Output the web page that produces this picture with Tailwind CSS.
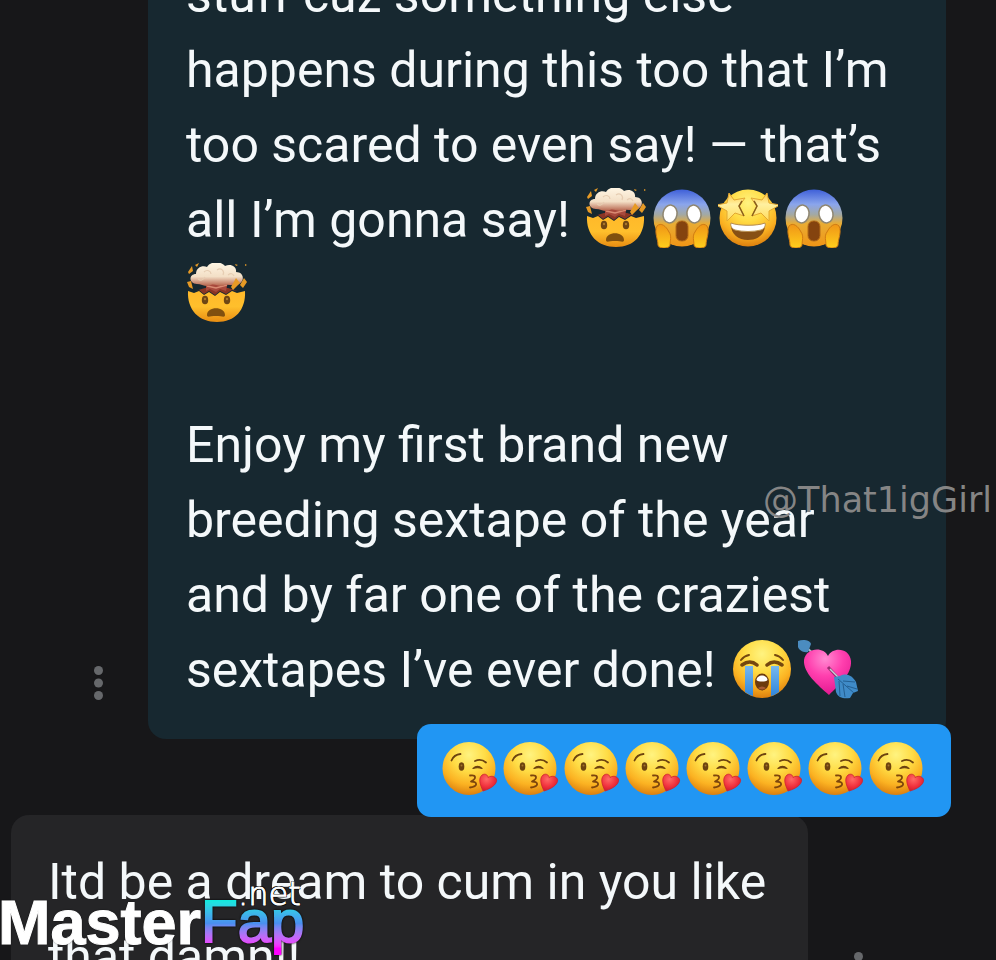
<!DOCTYPE html>
<html lang="en">
<head>
  <meta charset="UTF-8">
  <meta name="viewport" content="width=device-width, initial-scale=1.0">
  <title>Messages</title>
  <script src="https://cdn.jsdelivr.net/npm/@tailwindcss/browser@4"></script>
</head>
<body class="bg-[#171719] text-[#f4f8fa] font-['Roboto',sans-serif]">
  <!-- Emoji sprites -->
  <svg class="absolute w-0 h-0" aria-hidden="true">
    <defs>
      <radialGradient id="gFace" cx="50%" cy="24%" r="78%">
        <stop offset="0" stop-color="#fff380"/>
        <stop offset=".4" stop-color="#ffdc45"/>
        <stop offset=".72" stop-color="#fbb222"/>
        <stop offset="1" stop-color="#d97a0c"/>
      </radialGradient>
      <linearGradient id="gBowl" x1="0" y1="0" x2="0" y2="1">
        <stop offset="0" stop-color="#ffb92a"/>
        <stop offset=".5" stop-color="#ffbf2c"/>
        <stop offset="1" stop-color="#e88d12"/>
      </linearGradient>
      <linearGradient id="gScream" x1="0" y1="0" x2="0" y2="1">
        <stop offset="0" stop-color="#3f60d8"/>
        <stop offset=".26" stop-color="#8aa5ec"/>
        <stop offset=".44" stop-color="#a3a9a4"/>
        <stop offset=".6" stop-color="#e9ac33"/>
        <stop offset="1" stop-color="#f09516"/>
      </linearGradient>
      <linearGradient id="gHand" x1="0" y1="0" x2="0" y2="1">
        <stop offset="0" stop-color="#f09516"/>
        <stop offset="1" stop-color="#ffcf1c"/>
      </linearGradient>
      <linearGradient id="gCloud" x1="0" y1="0" x2="0" y2="1">
        <stop offset="0" stop-color="#fff6e4"/>
        <stop offset=".6" stop-color="#f3dfc6"/>
        <stop offset="1" stop-color="#b5614a"/>
      </linearGradient>
      <linearGradient id="gStar" x1="0" y1="0" x2="0" y2="1">
        <stop offset="0" stop-color="#ffc53d"/>
        <stop offset=".4" stop-color="#fff0a0"/>
        <stop offset="1" stop-color="#ffdc5c"/>
      </linearGradient>
      <linearGradient id="gTear" x1="0" y1="0" x2="0" y2="1">
        <stop offset="0" stop-color="#78b8ee"/>
        <stop offset="1" stop-color="#2f86dc"/>
      </linearGradient>
      <radialGradient id="gPink" cx="45%" cy="20%" r="85%">
        <stop offset="0" stop-color="#ff8ad2"/>
        <stop offset=".45" stop-color="#ff3fae"/>
        <stop offset="1" stop-color="#e0148d"/>
      </radialGradient>
      <radialGradient id="gRed" cx="40%" cy="30%" r="75%">
        <stop offset="0" stop-color="#ff6a66"/>
        <stop offset=".6" stop-color="#f0303c"/>
        <stop offset="1" stop-color="#c81a2c"/>
      </radialGradient>

      <symbol id="mindblown" viewBox="0 0 60 60">
        <path d="M1 28 L7 30 L12 28 L17 32 L22 29 L28 33 L33 29 L39 32 L45 28 L50 30 L58 28 C59 47 48 59 30 59 C12 59 0 47 1 28Z" fill="url(#gBowl)"/>
        <path d="M8 28 L12 27 L17 31 L22 28 L28 32 L33 28 L39 31 L45 27 L51 28 L41 25 L18 25Z" fill="#8b3524"/>
        <path d="M19 18 H41 L39 28 L33 26 L29 29 L23 26 L19 28Z" fill="#a8493c"/>
        <path d="M20 23 L29 25 L40 22" fill="none" stroke="#d98a72" stroke-width="1.500"/>
        <path d="M10 21 C1 20 2 11 9 11 C9 4 16 2 20 4 C23 -2 34 -2 38 3 C44 0 50 4 49 9 C57 9 58 18 52 21 C47 24 42 21 38 22 C33 25 28 20 24 22 C19 25 15 21 10 21Z" fill="url(#gCloud)"/>
        <path d="M17 9 C20 6 24 8 24 11 M30 7 C34 4 38 8 36 12 M11 16 Q15 19 18 14 M41 12 Q45 9 47 13" fill="none" stroke="#e6cdb2" stroke-width="1.200"/>
        <path d="M1 9 L5 3 L6 8 L2 11Z M8 2 L12 0 L10 4Z M0 19 L4 18 L6 26 L2 24Z M44 24 L49 15 L53 20 L46 27Z M53 22 L57 15 L60 19 L56 25Z M48 1 L51 2 L49 3Z M58 1 L60 2 L58 3Z" fill="#e79a25"/>
        <ellipse cx="18" cy="37" rx="3.200" ry="4.300" fill="#6e4614"/>
        <ellipse cx="40" cy="37" rx="3.200" ry="4.300" fill="#6e4614"/>
        <circle cx="18" cy="36" r="1.200" fill="#a8772c"/>
        <circle cx="40" cy="36" r="1.200" fill="#a8772c"/>
        <path d="M20 52 C20 43 38 43 38 52 C38 55 35 53 29 53 C23 53 20 55 20 52Z" fill="#80500f"/>
      </symbol>

      <symbol id="scream" viewBox="0 0 60 60">
        <circle cx="30" cy="30" r="28.5" fill="url(#gScream)"/>
        <ellipse cx="18" cy="26" rx="7" ry="9" transform="rotate(10 18 26)" fill="#fff" stroke="#8f8670" stroke-width="1.500"/>
        <ellipse cx="42" cy="26" rx="7" ry="9" transform="rotate(-10 42 26)" fill="#fff" stroke="#8f8670" stroke-width="1.500"/>
        <rect x="24" y="33" width="12" height="20" rx="5.500" fill="#84430f" stroke="#b36a18"/>
        <path d="M5 38 C9 34 14 38 17 44 C20 48 18 53 18 57 C18 61 6 61 6 57 C6 51 2 44 5 38Z" fill="url(#gHand)" stroke="#cf7a12"/>
        <path d="M55 38 C51 34 46 38 43 44 C40 48 42 53 42 57 C42 61 54 61 54 57 C54 51 58 44 55 38Z" fill="url(#gHand)" stroke="#cf7a12"/>
      </symbol>

      <symbol id="starstruck" viewBox="0 0 60 60">
        <circle cx="30" cy="30" r="28.5" fill="url(#gFace)"/>
        <path d="M13 35 C20 38 40 38 47 35 C48 46 40 52 30 52 C20 52 12 46 13 35Z" fill="#875014"/>
        <path d="M13 35 C20 38 40 38 47 35 C48 38 46 41 43 42 C35 44 25 44 17 42 C14 41 12 38 13 35Z" fill="#fff" stroke="#b99150"/>
        <path d="M11 5 L16 12 L27 10 L21 18 L26 28 L17 25 L9 33 L9 23 L-2 17 L9 15Z" fill="url(#gStar)" stroke="#e2a832" stroke-linejoin="round"/>
        <path d="M49 5 L44 12 L33 10 L39 18 L34 28 L43 25 L51 33 L51 23 L62 17 L51 15Z" fill="url(#gStar)" stroke="#e2a832" stroke-linejoin="round"/>
        <path d="M24 13 L21 18 L26 28 M36 13 L39 18 L34 28" fill="none" stroke="#8a5f1c" stroke-width="1.500"/>
      </symbol>

      <symbol id="sob" viewBox="0 0 60 60">
        <circle cx="30" cy="30" r="29" fill="url(#gFace)"/>
        <path d="M13 27 H21 V57 Q17 56 13 53Z M39 27 H47 V53 Q43 56 39 57Z" fill="url(#gTear)"/>
        <path d="M10 26 Q18 20 25 26 M35 26 Q42 20 50 26" fill="none" stroke="#74470f" stroke-width="3.500" stroke-linecap="round"/>
        <path d="M9 21 Q12 17 17 16 M43 16 Q48 17 51 21" fill="none" stroke="#74470f" stroke-width="2" stroke-linecap="round"/>
        <ellipse cx="30" cy="43" rx="7" ry="8.500" fill="#6c3a0d"/>
        <path d="M24.500 41 C25 35 35 35 35.500 41 C34 43 26 43 24.500 41Z" fill="#fff"/>
        <path d="M26 49 Q30 46 34 49 Q30 52 26 49Z" fill="#a55a35"/>
      </symbol>

      <symbol id="arrowheart" viewBox="0 0 60 60">
        <path d="M9 9 L17 16" stroke="#a9b8c4" stroke-width="2"/>
        <path d="M0 2 C5 0 12 1 13 5 L10 13 C5 14 1 11 0 8Z" fill="#4b8cc0"/>
        <path d="M31 56 C20 46 5 34 6 21 C8 9 25 7 30 17 C35 7 52 9 53 22 C54 35 41 46 31 56Z" fill="url(#gPink)"/>
        <path d="M30 28 L42 41" stroke="#9b2d70" stroke-width="3"/>
        <path d="M32 30 L46 44" stroke="#c4ced6" stroke-width="1.500"/>
        <path d="M36 38 L42 37 C50 33 55 38 58 43 L60 52 L55 54 L52 59 C46 60 40 59 38 53Z" fill="#3f8bc8"/>
        <path d="M40 40 L56 54 M41 42 L42 57 M45 45 L47 58 M45 42 L57 43 M49 47 L59 50" stroke="#235f92"/>
      </symbol>

      <symbol id="kiss" viewBox="0 0 56 54">
        <circle cx="27" cy="27" r="26.500" fill="url(#gFace)"/>
        <path d="M9.500 19 Q12 13 18.500 12.500 M33 19.500 Q39 16.500 44 21" fill="none" stroke="#6d430f" stroke-width="1.800" stroke-linecap="round"/>
        <ellipse cx="19.500" cy="25" rx="2.800" ry="4.300" fill="#6d430f"/>
        <circle cx="19.500" cy="24" r="1" fill="#a3742c"/>
        <path d="M31 27 Q35.500 22.500 40 27 Q35.500 25.500 31 27Z" fill="#6d430f" stroke="#6d430f" stroke-width="1.200" stroke-linejoin="round"/>
        <path d="M28 34 C34 33 35 37 29 40 C36 40 36 45 28 46" fill="none" stroke="#7d450c" stroke-width="1.800" stroke-linecap="round" stroke-linejoin="round"/>
        <path d="M41 49.500 C38 43 36 37 40 33.500 C43 31.500 46 33.500 46 36 C50 33 55.500 36 54.500 40 C53 45 46 48 41 49.500Z" fill="url(#gRed)" stroke="#cc2430" stroke-width=".8"/>
      </symbol>

      <symbol id="dots" viewBox="0 0 9 34">
        <circle cx="4.500" cy="4.500" r="4.500"/>
        <circle cx="4.500" cy="17" r="4.500"/>
        <circle cx="4.500" cy="29.500" r="4.500"/>
      </symbol>
    </defs>
  </svg>

  <main class="relative h-screen overflow-hidden">
    <!-- Paid post message -->
    <div class="-mt-[42px] pl-12 pr-[50px] flex items-end">
      <button type="button" aria-label="Message options" class="w-[100px] shrink-0 pb-[39px] flex justify-center text-[#66686b]">
        <svg class="w-[9px] h-[34px] fill-current"><use href="#dots"/></svg>
      </button>
      <div class="flex-1 min-w-0 rounded-b-[18px] bg-[#172830] pl-[38px] pb-[31px] text-[50px] leading-[75px] whitespace-nowrap">
        <p>stuff cuz something else<br>happens during this too that I’m<br>too scared to even say! — that’s</p>
        <p class="flex items-center h-[75px]">
          <span class="mr-4">all I’m gonna say!</span>
          <span class="flex gap-[6px] pb-[6px]">
            <svg class="size-[60px] overflow-visible" role="img" aria-label="mind blown"><use href="#mindblown"/></svg>
            <svg class="size-[60px]" role="img" aria-label="scream"><use href="#scream"/></svg>
            <svg class="size-[60px]" role="img" aria-label="star struck"><use href="#starstruck"/></svg>
            <svg class="size-[60px]" role="img" aria-label="scream"><use href="#scream"/></svg>
          </span>
        </p>
        <p class="flex items-center h-[75px] mb-[75px] pb-[6px] pl-px">
          <svg class="size-[60px]" role="img" aria-label="mind blown"><use href="#mindblown"/></svg>
        </p>
        <p>Enjoy my first brand new<br>breeding sextape of the year<br>and by far one of the craziest</p>
        <p class="flex items-center h-[75px]">
          <span class="mr-4">sextapes I’ve ever done!</span>
          <span class="flex gap-[6px] pb-[4px]">
            <svg class="size-[60px]" role="img" aria-label="sobbing"><use href="#sob"/></svg>
            <svg class="size-[60px]" role="img" aria-label="heart with arrow"><use href="#arrowheart"/></svg>
          </span>
        </p>
      </div>
    </div>

    <!-- Sent reply -->
    <div class="relative z-10 -mt-[15px] ml-auto mr-[45px] w-fit rounded-[14px] bg-[#2196f3] pl-[25px] pr-[26px] pt-4 pb-5 flex gap-[5px]">
      <svg class="w-[56px] h-[57px]" role="img" aria-label="kiss"><use href="#kiss"/></svg>
      <svg class="w-[56px] h-[57px]" role="img" aria-label="kiss"><use href="#kiss"/></svg>
      <svg class="w-[56px] h-[57px]" role="img" aria-label="kiss"><use href="#kiss"/></svg>
      <svg class="w-[56px] h-[57px]" role="img" aria-label="kiss"><use href="#kiss"/></svg>
      <svg class="w-[56px] h-[57px]" role="img" aria-label="kiss"><use href="#kiss"/></svg>
      <svg class="w-[56px] h-[57px]" role="img" aria-label="kiss"><use href="#kiss"/></svg>
      <svg class="w-[56px] h-[57px]" role="img" aria-label="kiss"><use href="#kiss"/></svg>
      <svg class="w-[56px] h-[57px]" role="img" aria-label="kiss"><use href="#kiss"/></svg>
    </div>

    <!-- Received message -->
    <div class="-mt-[2px] pl-[11px] pr-[88px] flex items-end">
      <p class="flex-1 min-w-0 rounded-[18px] bg-[#252527] pl-[37px] py-[30px] text-[50px] leading-[75px] whitespace-nowrap">Itd be a dream to cum in you like<br>that damn!!</p>
      <button type="button" aria-label="Message options" class="w-[100px] shrink-0 pb-[39px] flex justify-center text-[#66686b]">
        <svg class="w-[9px] h-[34px] fill-current"><use href="#dots"/></svg>
      </button>
    </div>

    <!-- Watermarks -->
    <div class="absolute z-20 top-[479px] right-1 text-[35px] leading-[42px] text-[#858585] font-['DejaVu_Sans',sans-serif]">@That1igGirl</div>
    <div class="absolute z-20 left-0 top-[886px] flex leading-[72px] font-['Liberation_Sans',sans-serif]">
      <span class="-ml-[2px] text-[63px] font-bold text-white [-webkit-text-stroke:1px_#fff] [text-shadow:0_0_2px_#000]">Master</span>
      <span class="text-[60px] bg-linear-to-b from-[#00f0dc] from-18% via-[#4a8ff0] via-52% to-[#ff00ff] to-86% bg-clip-text text-transparent [-webkit-text-stroke:2px_transparent] drop-shadow-[0_0_1px_#000]">Fap</span>
    </div>
    <div class="absolute z-20 left-[238px] top-[876px] text-[32px] leading-[36px] font-extralight text-white font-['DejaVu_Sans',sans-serif] [-webkit-text-stroke:1px_#fff] [text-shadow:1px_1px_0_#000,-1px_-1px_0_#000,1px_-1px_0_#000,-1px_1px_0_#000]">.net</div>
  </main>
</body>
</html>
